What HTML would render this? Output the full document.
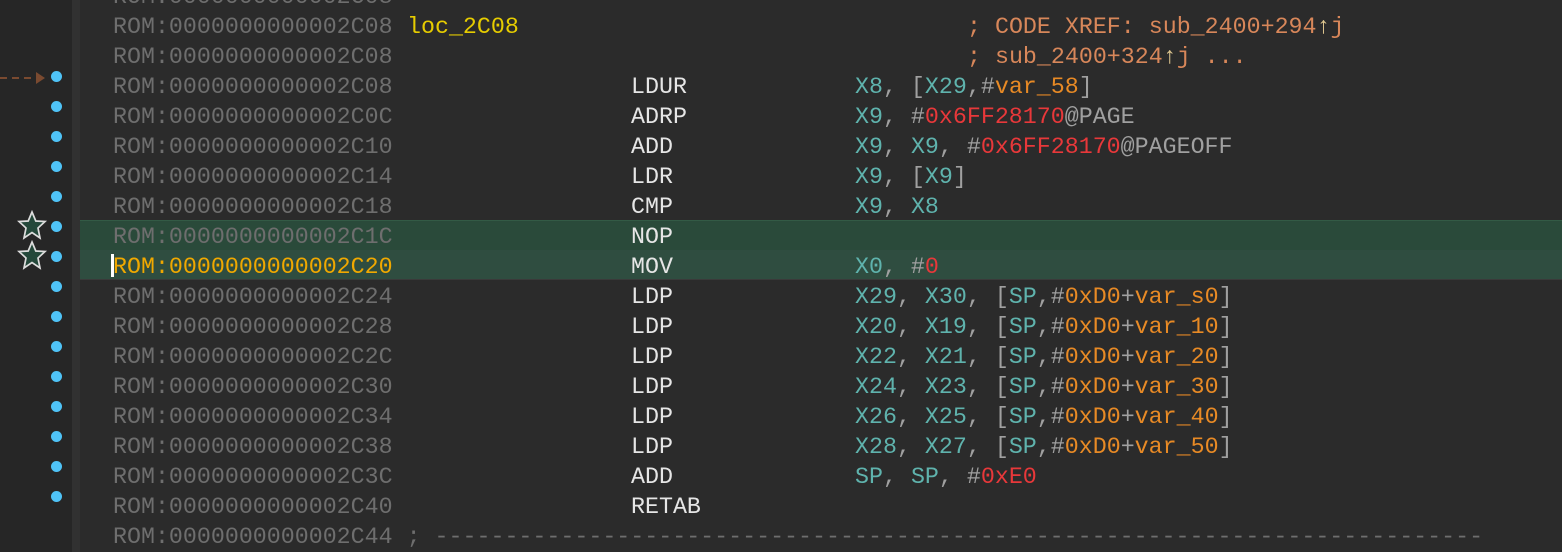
<!DOCTYPE html>
<html><head><meta charset="utf-8"><style>
html,body{margin:0;padding:0;width:1562px;height:552px;overflow:hidden;background:#2b2b2b;}
#left{position:absolute;left:0;top:0;width:72px;height:552px;background:#262626;}
#strip{position:absolute;left:72px;top:0;width:8px;height:552px;background:#313131;}
.hl{position:absolute;left:80px;right:0;}
.r{position:absolute;left:0;height:30px;width:1562px;line-height:30px;font-family:"Liberation Mono",monospace;font-size:23.3px;white-space:pre;color:#6e6e6e;}
.r>span.a,.r>span.b,.r>span.k,.r>span.o,.r>span.x{position:absolute;top:0}
.a{left:113px}.b{left:407px}.k{left:631px}.o{left:855px}.x{left:967px}
.l{color:#e6cc00}.m{color:#e6e6e6}.g{color:#5fb3ad}.v{color:#e88a25}.h{color:#e8383a}.p{color:#a0a0a0}.c{color:#d8875a}.ay{color:#f0a800}
.dot{position:absolute;left:51px;width:11px;height:11px;border-radius:50%;background:#4fc3f7;}
</style></head><body>
<div id="left"></div><div id="strip"></div>
<div class="hl" style="top:220px;height:30px;background:#2a4a3a;border-top:1px solid #335a45"></div>
<div class="hl" style="top:250px;height:29px;background:#2f4d40;border-bottom:1px solid #3a3a3a"></div>
<div style="position:absolute;left:111px;top:254px;width:3px;height:23px;background:#fff"></div>
<svg style="position:absolute;left:0;top:68px" width="50" height="20"><line x1="0" y1="10" x2="36" y2="10" stroke="#7a4a30" stroke-width="2" stroke-dasharray="7,5"/><polygon points="36,4 45,10 36,16" fill="#7a4a30"/></svg>
<svg style="position:absolute;left:17px;top:210px" width="32" height="64">
<polygon points="15,2 18.8,11 28,11.5 21,18 23,28 15,22.5 7,28 9,18 2,11.5 11.2,11" fill="#24483a" stroke="#ddd" stroke-width="1.7"/>
<polygon points="15,32 18.8,41 28,41.5 21,48 23,58 15,52.5 7,58 9,48 2,41.5 11.2,41" fill="#24483a" stroke="#ddd" stroke-width="1.7"/>
</svg>
<div class="dot" style="top:71px"></div><div class="dot" style="top:101px"></div><div class="dot" style="top:131px"></div><div class="dot" style="top:161px"></div><div class="dot" style="top:191px"></div><div class="dot" style="top:221px"></div><div class="dot" style="top:251px"></div><div class="dot" style="top:281px"></div><div class="dot" style="top:311px"></div><div class="dot" style="top:341px"></div><div class="dot" style="top:371px"></div><div class="dot" style="top:401px"></div><div class="dot" style="top:431px"></div><div class="dot" style="top:461px"></div><div class="dot" style="top:491px"></div>
<div class="r" style="top:-18px"><span class="a">ROM:0000000000002C08</span></div>
<div class="r" style="top:12px"><span class="a">ROM:0000000000002C08</span><span class="b l">loc_2C08</span><span class="x c">; CODE XREF: sub_2400+294<span style="color:#e0c890">↑</span>j</span></div>
<div class="r" style="top:42px"><span class="a">ROM:0000000000002C08</span><span class="x c">; sub_2400+324<span style="color:#e0c890">↑</span>j ...</span></div>
<div class="r" style="top:72px"><span class="a">ROM:0000000000002C08</span><span class="k m">LDUR</span><span class="o"><span class="g">X8</span><span class="p">, [</span><span class="g">X29</span><span class="p">,#</span><span class="v">var_58</span><span class="p">]</span></span></div>
<div class="r" style="top:102px"><span class="a">ROM:0000000000002C0C</span><span class="k m">ADRP</span><span class="o"><span class="g">X9</span><span class="p">, #</span><span class="h">0x6FF28170</span><span class="p">@PAGE</span></span></div>
<div class="r" style="top:132px"><span class="a">ROM:0000000000002C10</span><span class="k m">ADD</span><span class="o"><span class="g">X9</span><span class="p">, </span><span class="g">X9</span><span class="p">, #</span><span class="h">0x6FF28170</span><span class="p">@PAGEOFF</span></span></div>
<div class="r" style="top:162px"><span class="a">ROM:0000000000002C14</span><span class="k m">LDR</span><span class="o"><span class="g">X9</span><span class="p">, [</span><span class="g">X9</span><span class="p">]</span></span></div>
<div class="r" style="top:192px"><span class="a">ROM:0000000000002C18</span><span class="k m">CMP</span><span class="o"><span class="g">X9</span><span class="p">, </span><span class="g">X8</span></span></div>
<div class="r" style="top:222px"><span class="a">ROM:0000000000002C1C</span><span class="k m">NOP</span></div>
<div class="r" style="top:252px"><span class="a ay">ROM:0000000000002C20</span><span class="k m">MOV</span><span class="o"><span class="g">X0</span><span class="p">, #</span><span class="h">0</span></span></div>
<div class="r" style="top:282px"><span class="a">ROM:0000000000002C24</span><span class="k m">LDP</span><span class="o"><span class="g">X29</span><span class="p">, </span><span class="g">X30</span><span class="p">, [</span><span class="g">SP</span><span class="p">,#</span><span class="v">0xD0</span><span class="p">+</span><span class="v">var_s0</span><span class="p">]</span></span></div>
<div class="r" style="top:312px"><span class="a">ROM:0000000000002C28</span><span class="k m">LDP</span><span class="o"><span class="g">X20</span><span class="p">, </span><span class="g">X19</span><span class="p">, [</span><span class="g">SP</span><span class="p">,#</span><span class="v">0xD0</span><span class="p">+</span><span class="v">var_10</span><span class="p">]</span></span></div>
<div class="r" style="top:342px"><span class="a">ROM:0000000000002C2C</span><span class="k m">LDP</span><span class="o"><span class="g">X22</span><span class="p">, </span><span class="g">X21</span><span class="p">, [</span><span class="g">SP</span><span class="p">,#</span><span class="v">0xD0</span><span class="p">+</span><span class="v">var_20</span><span class="p">]</span></span></div>
<div class="r" style="top:372px"><span class="a">ROM:0000000000002C30</span><span class="k m">LDP</span><span class="o"><span class="g">X24</span><span class="p">, </span><span class="g">X23</span><span class="p">, [</span><span class="g">SP</span><span class="p">,#</span><span class="v">0xD0</span><span class="p">+</span><span class="v">var_30</span><span class="p">]</span></span></div>
<div class="r" style="top:402px"><span class="a">ROM:0000000000002C34</span><span class="k m">LDP</span><span class="o"><span class="g">X26</span><span class="p">, </span><span class="g">X25</span><span class="p">, [</span><span class="g">SP</span><span class="p">,#</span><span class="v">0xD0</span><span class="p">+</span><span class="v">var_40</span><span class="p">]</span></span></div>
<div class="r" style="top:432px"><span class="a">ROM:0000000000002C38</span><span class="k m">LDP</span><span class="o"><span class="g">X28</span><span class="p">, </span><span class="g">X27</span><span class="p">, [</span><span class="g">SP</span><span class="p">,#</span><span class="v">0xD0</span><span class="p">+</span><span class="v">var_50</span><span class="p">]</span></span></div>
<div class="r" style="top:462px"><span class="a">ROM:0000000000002C3C</span><span class="k m">ADD</span><span class="o"><span class="g">SP</span><span class="p">, </span><span class="g">SP</span><span class="p">, #</span><span class="h">0xE0</span></span></div>
<div class="r" style="top:492px"><span class="a">ROM:0000000000002C40</span><span class="k m">RETAB</span></div>
<div class="r" style="top:522px"><span class="a">ROM:0000000000002C44 ; ---------------------------------------------------------------------------</span></div>
</body></html>
